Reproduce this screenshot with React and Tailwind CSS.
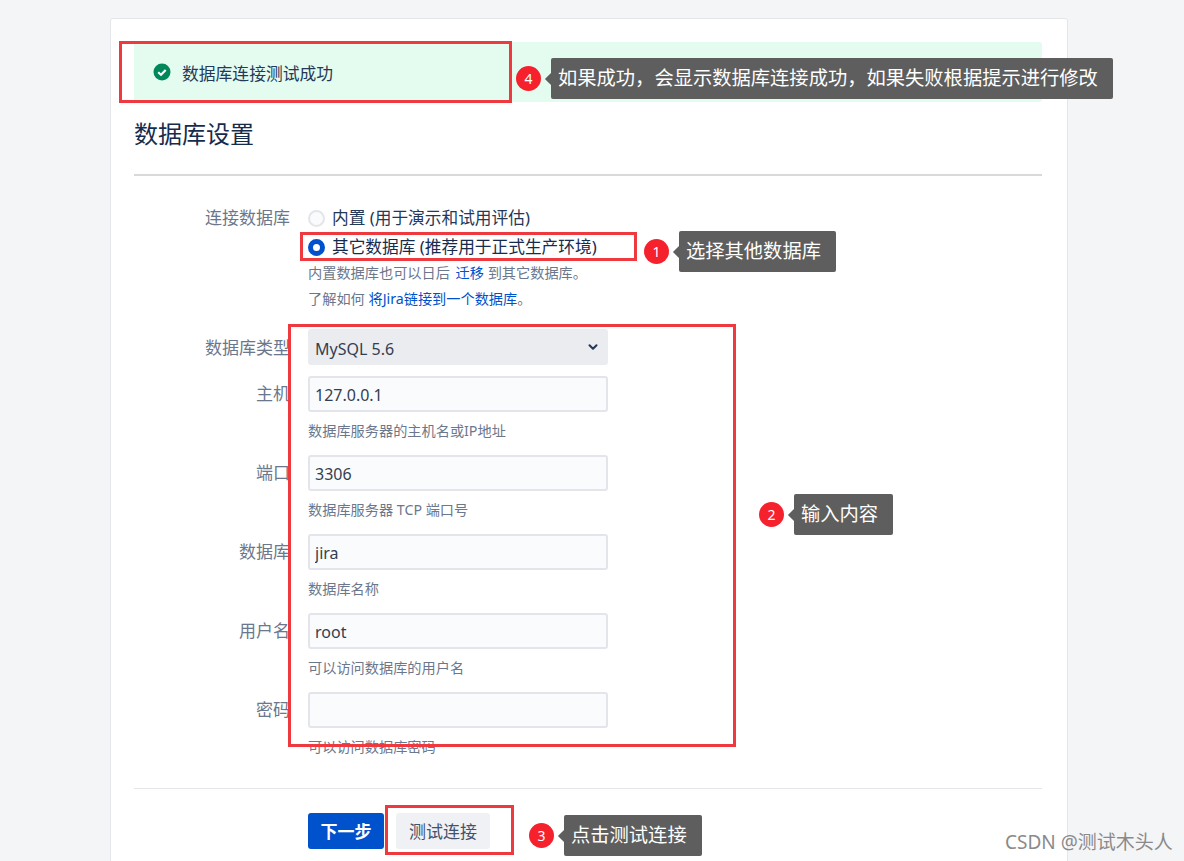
import { ChevronDown } from "lucide-react";

const fields = [
  { label: "主机", value: "127.0.0.1", hint: "数据库服务器的主机名或IP地址" },
  { label: "端口", value: "3306", hint: "数据库服务器 TCP 端口号" },
  { label: "数据库", value: "jira", hint: "数据库名称" },
  { label: "用户名", value: "root", hint: "可以访问数据库的用户名" },
  { label: "密码", value: "", hint: "可以访问数据库密码" },
];

function Note({ n, text, className }) {
  return (
    <div className={"absolute flex items-center " + className}>
      <div className="w-[25px] h-[25px] rounded-full bg-[#f5222d] text-white text-[14px] flex items-center justify-center shrink-0">
        {n}
      </div>
      <div className="relative ml-[3px] pl-[7px]">
        <div className="absolute left-[3px] top-1/2 -mt-[5px] w-[10px] h-[10px] rotate-45 bg-[#5e5e5e]" />
        <div className="relative h-[41px] pl-[7px] pr-[15px] flex items-center rounded-[2px] bg-[#5e5e5e] text-white text-[19.3px] whitespace-nowrap">
          {text}
        </div>
      </div>
    </div>
  );
}

function Field({ label, value, hint }) {
  return (
    <div className="flex h-[79px]">
      <div className="w-[156px] pt-[6px] text-right text-[17px] leading-[24px] text-[#6b778c] shrink-0">{label}</div>
      <div className="ml-[18px]">
        <input
          readOnly
          value={value}
          className="block w-[300px] h-[36px] px-[5px] pt-[1px] rounded-[3px] border-2 border-[#e3e5ea] bg-[#fafbfc] text-[16px] text-[#333f50] outline-none"
        />
        <div className="mt-[9px] text-[14.2px] leading-[20px] text-[#6b778c]">{hint}</div>
      </div>
    </div>
  );
}

export default function App() {
  return (
    <div
      className="relative h-[861px] overflow-hidden bg-[#f4f5f7]"
      style={{ fontFamily: '"Noto Sans", "Noto Sans CJK SC", sans-serif' }}
    >
      <div className="absolute left-[110px] top-[18px] w-[958px] h-[860px] rounded-[3px] border border-[#e4e6ea] bg-white pl-[23px] pr-[25px] pt-[23px]">
        <div className="h-[60px] flex items-center pl-[19px] rounded-[3px] bg-[#e3fcef]">
          <svg width="18" height="18" viewBox="0 0 18 18" className="shrink-0">
            <circle cx="9" cy="9" r="8.5" fill="#00875a" />
            <path d="M5.2 9.2l2.8 2.6 4.7-4.9" fill="none" stroke="#fff" strokeWidth="2.2" />
          </svg>
          <span className="ml-[11px] pt-[4px] text-[16.8px] text-[#253858]">数据库连接测试成功</span>
        </div>

        <h1 className="mt-[13px] text-[24px] leading-[38px] text-[#172b4d]">数据库设置</h1>
        <div className="mt-[21px] h-[2px] bg-[#d9d9d9]" />

        <div className="flex mt-[29px]">
          <div className="w-[156px] text-right text-[17px] leading-[26px] text-[#6b778c] shrink-0">连接数据库</div>
          <div className="ml-[18px]">
            <div className="flex items-center h-[26px] text-[16.7px] text-[#253858]">
              <span className="w-[17px] h-[17px] rounded-full border-2 border-[#e3e5ea] bg-[#fafbfc] mr-[7px]" />
              内置 (用于演示和试用评估)
            </div>
            <div className="flex items-center h-[26px] mt-[3px] text-[16.7px] text-[#172b4d]">
              <span className="w-[17px] h-[17px] rounded-full border-[5px] border-[#0052cc] bg-white mr-[7px]" />
              其它数据库 (推荐用于正式生产环境)
            </div>
            <div className="mt-[3px] text-[14.2px] leading-[20px] text-[#6b778c]">
              内置数据库也可以日后 <span className="text-[#0052cc] ml-[2px]">迁移</span> 到其它数据库。
            </div>
            <div className="mt-[6px] text-[14.2px] leading-[20px] text-[#6b778c]">
              了解如何 <span className="text-[#0052cc]">将Jira链接到一个数据库</span>。
            </div>
          </div>
        </div>

        <div className="flex mt-[20px]">
          <div className="w-[156px] pt-[7px] text-right text-[17px] leading-[24px] text-[#6b778c] shrink-0">数据库类型</div>
          <div className="ml-[18px] w-[300px] h-[36px] pl-[7px] pr-[8px] pt-[3px] flex items-center justify-between rounded-[3px] bg-[#ebecf0] text-[16px] text-[#333f50]">
            MySQL 5.6
            <ChevronDown size={14} strokeWidth={3.5} className="text-[#253858] -mt-[3px]" />
          </div>
        </div>

        <div className="mt-[11px]">
          {fields.map((f) => (
            <Field key={f.label} {...f} />
          ))}
        </div>

        <div className="mt-[17px] h-px bg-[#e4e6ea]" />
        <div className="flex mt-[24px] ml-[174px] gap-[12px]">
          <button className="w-[76px] h-[36px] pt-[2px] rounded-[3px] bg-[#0052cc] text-white text-[17px] font-bold">下一步</button>
          <button className="w-[94px] h-[36px] pt-[2px] rounded-[3px] bg-[#f0f1f4] text-[#42526e] text-[17px]">测试连接</button>
        </div>
      </div>

      {/* annotations on top of the screenshot */}
      <div className="absolute left-[119px] top-[41px] w-[393px] h-[62px] border-[3px] border-[#ee3a3f]" />
      <div className="absolute left-[300px] top-[232px] w-[337px] h-[29px] border-[3px] border-[#ee3a3f]" />
      <div className="absolute left-[288px] top-[324px] w-[448px] h-[423px] border-[3px] border-[#ee3a3f]" />
      <div className="absolute left-[385px] top-[805px] w-[129px] h-[50px] border-[3px] border-[#ee3a3f]" />

      <Note n="4" text="如果成功，会显示数据库连接成功，如果失败根据提示进行修改" className="left-[516px] top-[58px]" />
      <Note n="1" text="选择其他数据库" className="left-[644px] top-[231px]" />
      <Note n="2" text="输入内容" className="left-[759px] top-[494px]" />
      <Note n="3" text="点击测试连接" className="left-[529px] top-[815px]" />

      <div className="absolute left-[1005px] top-[830px] text-[19px] leading-[24px] text-[#8a8a8a] whitespace-nowrap">
        CSDN @测试木头人
      </div>
    </div>
  );
}
